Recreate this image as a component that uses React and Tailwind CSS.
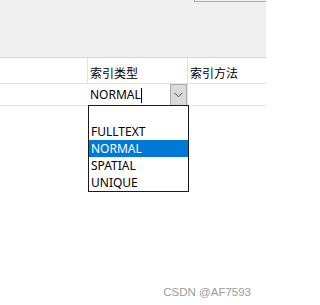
import { useState } from 'react';

const FONT = { fontFamily: '"Noto Sans", "Noto Sans CJK SC", sans-serif' };

function Chevron() {
  return (
    <svg width="9" height="6" viewBox="0 0 9 6" fill="none">
      <path d="M0.5 0.8 L4.5 4.8 L8.5 0.8" stroke="#505050" strokeWidth="1" />
    </svg>
  );
}

export default function App() {
  const [selected] = useState('NORMAL');
  const options = ['', 'FULLTEXT', 'NORMAL', 'SPATIAL', 'UNIQUE'];

  return (
    <div className="relative w-[266px] h-[305px] bg-white overflow-hidden text-black" style={FONT}>
      {/* toolbar area */}
      <div className="h-[57px] bg-[#f0f0f0] flex justify-end">
        <div className="w-[72px] h-[2px] border-l border-b border-[#acacac]" />
      </div>
      <div className="h-px bg-[#d5d5d5]" />

      {/* header row */}
      <div className="flex h-[26px] border-b border-[#e3e3e3] text-[12px] leading-none">
        <div className="w-[88px] border-r border-[#e3e3e3]" />
        <div className="w-[100px] border-r border-[#e3e3e3] flex items-center pl-[2px] pt-[6px]">索引类型</div>
        <div className="flex-1 flex items-center pl-[2px] pt-[6px]">索引方法</div>
      </div>

      {/* edit row */}
      <div className="flex h-[22px] border-b border-[#e3e3e3] text-[12px] leading-none">
        <div className="w-[88px]" />
        <div className="w-[100px] border-r border-[#e3e3e3] flex items-center">
          <div className="flex-1 flex items-center pl-[2px] pt-px">
            <span>{selected}</span>
            <span className="w-px h-[15px] bg-black" />
          </div>
          <div className="w-[17px] h-[22px] bg-[#dadada] border border-[#adadad] flex items-center justify-center">
            <Chevron />
          </div>
        </div>
        <div className="flex-1" />
      </div>

      {/* dropdown list */}
      <div className="absolute left-[88px] top-[105px] w-[101px] border border-[#1a1a1a] bg-white text-[12px] leading-none">
        {options.map((o, i) => (
          <div
            key={i}
            className={`h-[17px] flex items-center pl-[2px] ${o === selected ? 'bg-[#0078d7] text-white' : ''}`}
          >
            {o}
          </div>
        ))}
      </div>

      {/* watermark */}
      <div
        className="absolute right-[15px] top-[287px] text-[11.5px] leading-none text-[#9b9b9b]"
        style={{ fontFamily: '"Liberation Sans", Arial, sans-serif' }}
      >
        CSDN @AF7593
      </div>
    </div>
  );
}
